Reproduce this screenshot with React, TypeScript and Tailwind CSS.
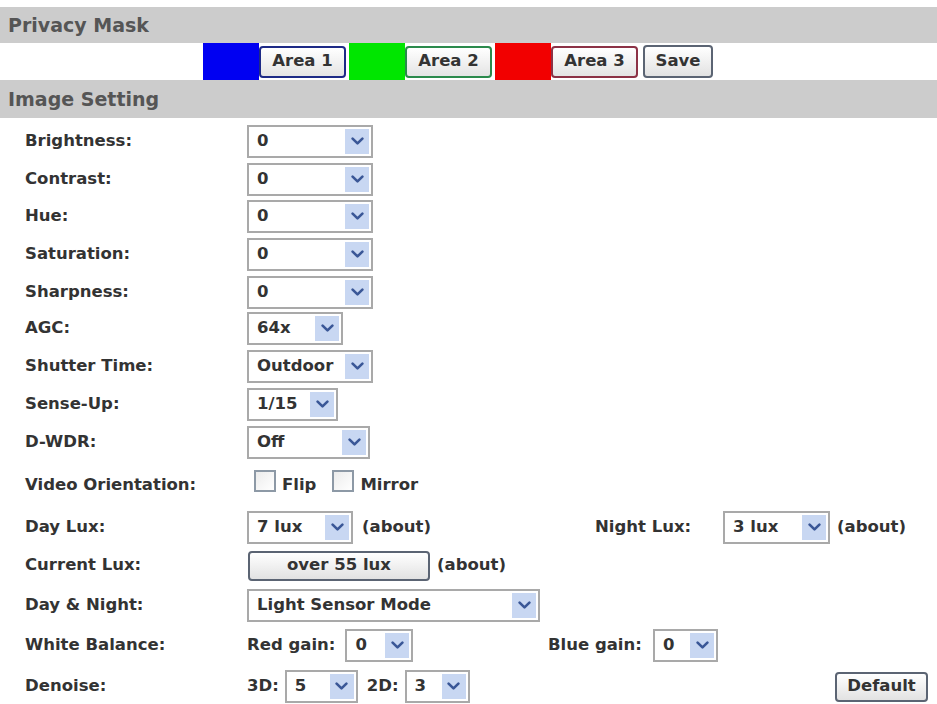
import type { ReactNode } from 'react';

function Chevron() {
  return (
    <svg width="13" height="9" viewBox="0 0 13 9" fill="none">
      <path d="M1.6 1.6 L6.5 6.4 L11.4 1.6" stroke="#3a5797" strokeWidth="2.6" strokeLinecap="round" strokeLinejoin="round" />
    </svg>
  );
}

function Select({ value, width }: { value: string; width: string }) {
  return (
    <div className={`${width} h-[33px] flex items-center border-2 border-[#a9a9a9] bg-white pl-[8px] pr-[2px]`}>
      <span className="flex-1 text-[#333]">{value}</span>
      <span className="w-[24px] h-[25px] bg-[#c8d7f2] flex items-center justify-center">
        <Chevron />
      </span>
    </div>
  );
}

function Check({ label }: { label: string }) {
  return (
    <div className="flex items-center">
      <span className="w-[22px] h-[22px] mb-[8px] border-2 border-[#8d99a6] bg-linear-to-br from-[#ececec] to-white" />
      <span className="ml-[6px]">{label}</span>
    </div>
  );
}

const btn =
  'bg-linear-to-b from-white to-[#e2e2e2] border-2 border-[#5b6473] rounded-[4px] text-[#333] flex items-center justify-center';

function Row({ label, h, children }: { label: string; h: string; children?: ReactNode }) {
  return (
    <div className={`flex items-center ${h}`}>
      <div className="w-[247px] pl-[25px] shrink-0">{label}</div>
      <div className="flex items-center flex-1">{children}</div>
    </div>
  );
}

function AreaGroup({ fill, border, label }: { fill: string; border: string; label: string }) {
  return (
    <div className="flex items-center h-full">
      <div className={`w-[56px] h-full ${fill}`} />
      <div className={`w-[87px] h-[32px] bg-linear-to-b from-white to-[#e4e4e4] border-2 ${border} rounded-[4px] flex items-center justify-center`}>
        {label}
      </div>
    </div>
  );
}

export default function App() {
  return (
    <div className="w-[937px] h-[704px] bg-white overflow-hidden font-['DejaVu_Sans',sans-serif] font-bold text-[16.5px] text-[#333] pt-[7px]">
      <div className="h-[36px] bg-[#cccccc] flex items-center pl-[8px] text-[19px] text-[#555]">Privacy Mask</div>

      <div className="h-[37px] flex items-center pl-[203px] gap-[3px]">
        <AreaGroup fill="bg-[#0000f2]" border="border-[#1d2a86]" label="Area 1" />
        <AreaGroup fill="bg-[#00e600]" border="border-[#2b8a4c]" label="Area 2" />
        <AreaGroup fill="bg-[#f20000]" border="border-[#8c3246]" label="Area 3" />
        <div className={`${btn} w-[70px] h-[33px] ml-[2px]`}>Save</div>
      </div>

      <div className="h-[38px] bg-[#cccccc] flex items-center pl-[8px] text-[19px] text-[#555]">Image Setting</div>

      <div className="pt-[4px]">
        <Row label="Brightness:" h="h-[38px]">
          <Select value="0" width="w-[126px]" />
        </Row>
        <Row label="Contrast:" h="h-[38px]">
          <Select value="0" width="w-[126px]" />
        </Row>
        <Row label="Hue:" h="h-[37px]">
          <Select value="0" width="w-[126px]" />
        </Row>
        <Row label="Saturation:" h="h-[39px]">
          <Select value="0" width="w-[126px]" />
        </Row>
        <Row label="Sharpness:" h="h-[36px]">
          <Select value="0" width="w-[126px]" />
        </Row>
        <Row label="AGC:" h="h-[37px]">
          <Select value="64x" width="w-[96px]" />
        </Row>
        <Row label="Shutter Time:" h="h-[38px]">
          <Select value="Outdoor" width="w-[126px]" />
        </Row>
        <Row label="Sense-Up:" h="h-[38px]">
          <Select value="1/15" width="w-[91px]" />
        </Row>
        <Row label="D-WDR:" h="h-[38px]">
          <Select value="Off" width="w-[123px]" />
        </Row>
        <Row label="Video Orientation:" h="h-[48px]">
          <div className="flex items-center ml-[7px]">
            <Check label="Flip" />
            <div className="ml-[16px]">
              <Check label="Mirror" />
            </div>
          </div>
        </Row>
        <Row label="Day Lux:" h="h-[36px]">
          <div className="w-[348px] flex items-center">
            <Select value="7 lux" width="w-[106px]" />
            <span className="ml-[9px]">(about)</span>
          </div>
          <div className="w-[128px]">Night Lux:</div>
          <Select value="3 lux" width="w-[107px]" />
          <span className="ml-[7px]">(about)</span>
        </Row>
        <Row label="Current Lux:" h="h-[41px]">
          <div className={`${btn} w-[182px] h-[30px] ml-[1px]`}>over 55 lux</div>
          <span className="ml-[7px]">(about)</span>
        </Row>
        <Row label="Day & Night:" h="h-[39px]">
          <Select value="Light Sensor Mode" width="w-[293px]" />
        </Row>
        <Row label="White Balance:" h="h-[41px]">
          <div className="w-[301px] flex items-center">
            <span>Red gain:</span>
            <div className="ml-[10px]">
              <Select value="0" width="w-[68px]" />
            </div>
          </div>
          <div className="w-[105px]">Blue gain:</div>
          <Select value="0" width="w-[65px]" />
        </Row>
        <Row label="Denoise:" h="h-[41px]">
          <span>3D:</span>
          <div className="ml-[6px]">
            <Select value="5" width="w-[73px]" />
          </div>
          <span className="ml-[9px]">2D:</span>
          <div className="ml-[6px]">
            <Select value="3" width="w-[65px]" />
          </div>
          <div className={`${btn} w-[93px] h-[30px] ml-auto mr-[9px]`}>Default</div>
        </Row>
      </div>
    </div>
  );
}
